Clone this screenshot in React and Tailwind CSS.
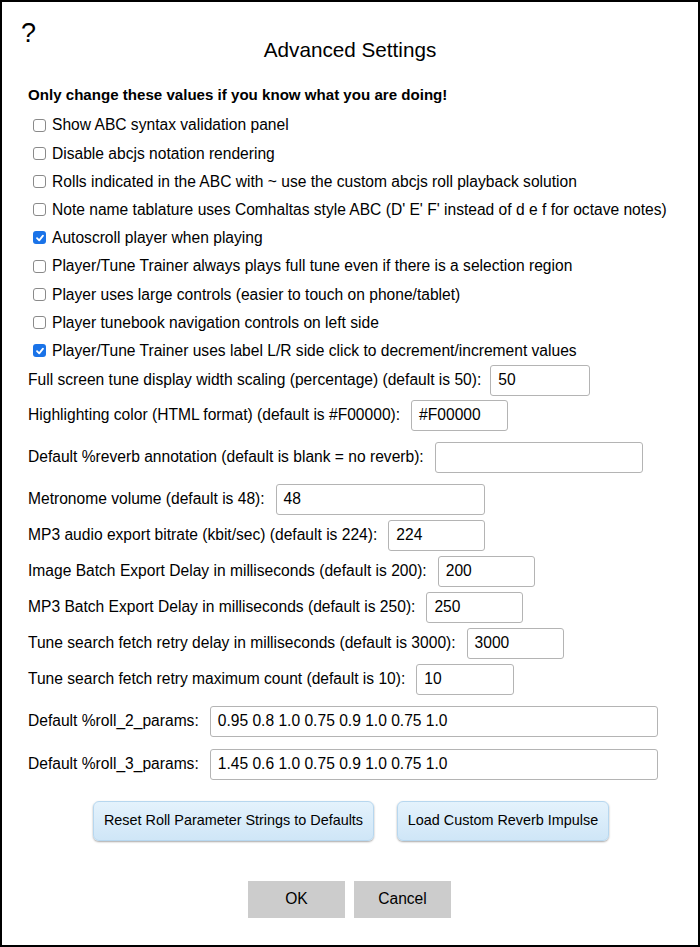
import React from "react";

function Box({ checked }) {
  if (checked) {
    return (
      <span className="inline-flex h-[13px] w-[13px] shrink-0 items-center justify-center rounded-[3px] bg-[#1a73e8]">
        <svg width="10" height="10" viewBox="0 0 10 10">
          <path d="M2 5.2 L4.2 7.4 L8 2.6" fill="none" stroke="white" strokeWidth="1.8" strokeLinecap="round" strokeLinejoin="round" />
        </svg>
      </span>
    );
  }
  return <span className="inline-block h-[13px] w-[13px] shrink-0 rounded-[3px] border border-[#8a8a8a] bg-white" />;
}

const checks = [
  ["Show ABC syntax validation panel", false],
  ["Disable abcjs notation rendering", false],
  ["Rolls indicated in the ABC with ~ use the custom abcjs roll playback solution", false],
  ["Note name tablature uses Comhaltas style ABC (D' E' F' instead of d e f for octave notes)", false],
  ["Autoscroll player when playing", true],
  ["Player/Tune Trainer always plays full tune even if there is a selection region", false],
  ["Player uses large controls (easier to touch on phone/tablet)", false],
  ["Player tunebook navigation controls on left side", false],
  ["Player/Tune Trainer uses label L/R side click to decrement/increment values", true],
];

function Field({ label, value, w, mt, mr = "mr-[11px]" }) {
  return (
    <div className={"flex items-center " + mt}>
      <span className={"whitespace-nowrap " + mr}>{label}</span>
      <div className={"flex h-[31px] items-center rounded-[3px] border border-[#b4b4b4] bg-white px-[7px] " + w}>
        {value}
      </div>
    </div>
  );
}

export default function App() {
  return (
    <div
      className="relative h-[947px] w-[700px] overflow-hidden border-2 border-black bg-white text-[15.6px] text-black"
      style={{ fontFamily: '"Liberation Sans", Arial, sans-serif' }}
    >
      <div className="absolute left-[19px] top-[18px] text-[27px] leading-none">?</div>
      <div className="pt-[36px] text-center text-[20.7px] leading-[24px]">Advanced Settings</div>
      <div className="px-[26px]">
        <div className="mt-[23px] text-[15.1px] font-bold leading-[20px]">
          Only change these values if you know what you are doing!
        </div>
        <div className="mt-[6px] flex flex-col">
          {checks.map(([t, c], i) => (
            <div key={i} className="flex h-[28.2px] items-center">
              <span className="ml-[5px] mr-[6px] flex">
                <Box checked={c} />
              </span>
              <span className="whitespace-nowrap">{t}</span>
            </div>
          ))}
        </div>
        <Field mt="mt-0" mr="mr-[9px]" label="Full screen tune display width scaling (percentage) (default is 50):" value="50" w="w-[100px]" />
        <Field mt="mt-[4px]" label="Highlighting color (HTML format) (default is #F00000):" value="#F00000" w="w-[97px]" />
        <Field mt="mt-[11px]" label="Default %reverb annotation (default is blank = no reverb):" value="" w="w-[208px]" />
        <Field mt="mt-[11px]" label="Metronome volume (default is 48):" value="48" w="w-[209px]" />
        <Field mt="mt-[5px]" label="MP3 audio export bitrate (kbit/sec) (default is 224):" value="224" w="w-[97px]" />
        <Field mt="mt-[5px]" label="Image Batch Export Delay in milliseconds (default is 200):" value="200" w="w-[97px]" />
        <Field mt="mt-[5px]" label="MP3 Batch Export Delay in milliseconds (default is 250):" value="250" w="w-[97px]" />
        <Field mt="mt-[5px]" label="Tune search fetch retry delay in milliseconds (default is 3000):" value="3000" w="w-[97px]" />
        <Field mt="mt-[5px]" label="Tune search fetch retry maximum count (default is 10):" value="10" w="w-[98px]" />
        <Field mt="mt-[11px]" label="Default %roll_2_params:" value="0.95 0.8 1.0 0.75 0.9 1.0 0.75 1.0" w="w-[448px]" />
        <Field mt="mt-[12px]" label="Default %roll_3_params:" value="1.45 0.6 1.0 0.75 0.9 1.0 0.75 1.0" w="w-[448px]" />
      </div>
      <div className="mt-[21px] flex justify-center gap-[23px] pl-[2px]">
        <div className="flex h-[40px] w-[281px] items-center justify-center rounded-[6px] border border-[#b7d7ef] bg-gradient-to-b from-[#e4f2fc] to-[#cfe6f7] text-[14.4px] shadow-[0_1px_2px_rgba(0,0,0,0.35)]">
          Reset Roll Parameter Strings to Defaults
        </div>
        <div className="flex h-[40px] w-[212px] items-center justify-center rounded-[6px] border border-[#b7d7ef] bg-gradient-to-b from-[#e4f2fc] to-[#cfe6f7] text-[14.4px] shadow-[0_1px_2px_rgba(0,0,0,0.35)]">
          Load Custom Reverb Impulse
        </div>
      </div>
      <div className="mt-[40px] flex justify-center gap-[9px] pr-[1px]">
        <div className="flex h-[37px] w-[97px] items-center justify-center bg-[#cccccc] text-[15.6px]">OK</div>
        <div className="flex h-[37px] w-[97px] items-center justify-center bg-[#cccccc] text-[15.6px]">Cancel</div>
      </div>
    </div>
  );
}
